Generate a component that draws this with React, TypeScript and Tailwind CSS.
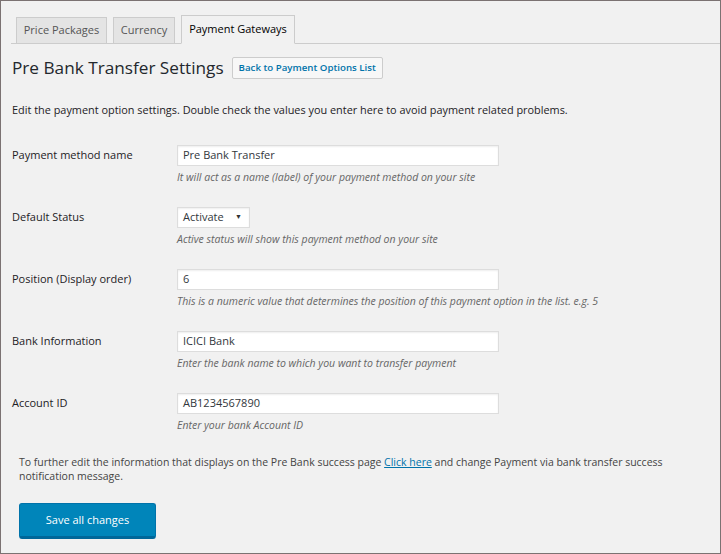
import React from "react";

const rows = [
  { label: "Payment method name", value: "Pre Bank Transfer", desc: "It will act as a name (label) of your payment method on your site", type: "input" },
  { label: "Default Status", value: "Activate", desc: "Active status will show this payment method on your site", type: "select" },
  { label: "Position (Display order)", value: "6", desc: "This is a numeric value that determines the position of this payment option in the list. e.g. 5", type: "input" },
  { label: "Bank Information", value: "ICICI Bank", desc: "Enter the bank name to which you want to transfer payment", type: "input" },
  { label: "Account ID", value: "AB1234567890", desc: "Enter your bank Account ID", type: "input" },
];

export default function App() {
  return (
    <div className="w-[721px] h-[554px] border border-[#7b7272] bg-[#f1f1f1] font-['Open_Sans',sans-serif] text-[#23282d] overflow-hidden">
      <div className="mt-[14px] ml-[10px] flex items-end gap-[6px] border-b border-[#cccccc] pl-[5px]">
        <div className="-mb-px h-[27px] w-[91px] flex items-center justify-center border border-[#cccccc] bg-[#e4e4e4] text-[11px] text-[#555555]">Price Packages</div>
        <div className="-mb-px h-[27px] w-[62px] flex items-center justify-center border border-[#cccccc] bg-[#e4e4e4] text-[11px] text-[#555555]">Currency</div>
        <div className="-mb-px h-[29px] w-[114px] flex items-center justify-center border border-[#cccccc] border-b-[#f1f1f1] bg-[#f1f1f1] text-[11px] text-[#000000]">Payment Gateways</div>
      </div>
      <div className="pl-[11px] pr-[10px]">
        <div className="mt-[13px] flex items-center gap-[8px]">
          <h1 className="text-[17.2px] leading-[22px] font-normal text-[#23282d]">Pre Bank Transfer Settings</h1>
          <button className="h-[22px] border border-[#cccccc] bg-[#f7f7f7] px-[6px] text-[9.7px] font-semibold text-[#0073aa] rounded-[2px]">Back to Payment Options List</button>
        </div>
        <p className="mt-[23px] text-[10.9px] leading-[16px] text-[#1d2125]">Edit the payment option settings. Double check the values you enter here to avoid payment related problems.</p>
        <div className="mt-[27px] flex flex-col gap-[23px]">
          {rows.map((r) => (
            <div key={r.label} className="flex">
              <div className="w-[165px] pt-[2px] text-[11px] leading-[16px] text-[#1d2125]">{r.label}</div>
              <div className="flex flex-col">
                {r.type === "input" ? (
                  <div className="h-[21px] w-[322px] border border-[#dddddd] bg-white shadow-[inset_0_1px_2px_rgba(0,0,0,0.07)] px-[5px] flex items-center text-[11px] text-[#32373c]">{r.value}</div>
                ) : (
                  <div className="h-[21px] w-[73px] border border-[#dddddd] bg-white shadow-[inset_0_1px_2px_rgba(0,0,0,0.07)] pl-[5px] pr-[7px] flex items-center justify-between text-[11px] text-[#32373c]">
                    <span>{r.value}</span>
                    <span className="text-[7px] text-[#333]">▼</span>
                  </div>
                )}
                <div className="mt-[4px] text-[10.5px] italic leading-[14px] text-[#666666]">{r.desc}</div>
              </div>
            </div>
          ))}
        </div>
        <p className="mt-[23px] pl-[7px] pr-[40px] text-[10.5px] leading-[14px] text-[#444444]">
          To further edit the information that displays on the Pre Bank success page <a className="text-[#0073aa] underline">Click here</a> and change Payment via bank transfer success notification message.
        </p>
        <button className="mt-[20px] ml-[7px] h-[36px] w-[137px] rounded-[3px] border border-[#0073aa] border-b-[3px] border-b-[#006799] bg-[#0085ba] text-[11px] text-white">Save all changes</button>
      </div>
    </div>
  );
}
